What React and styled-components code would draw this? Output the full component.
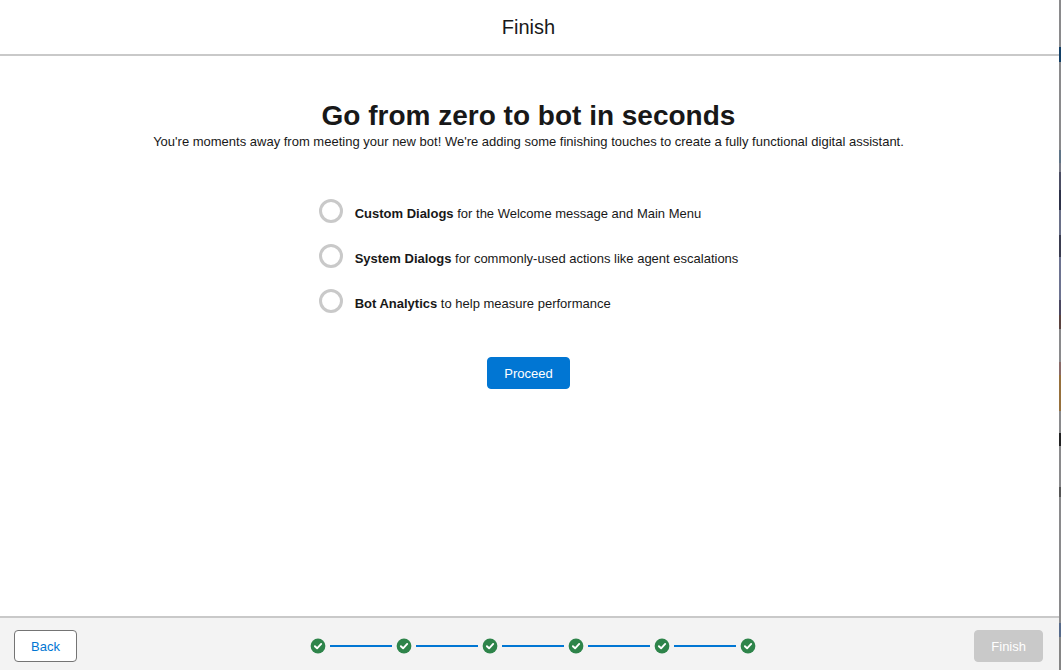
import React from "react";
import styled, { createGlobalStyle } from "styled-components";

const GlobalStyle = createGlobalStyle`
  *,
  *::before,
  *::after {
    box-sizing: border-box;
  }

  body {
    margin: 0;
    background: #8a8a8c;
    color: #181818;
    font-family: "Liberation Sans", Arial, sans-serif;
    font-size: 13px;
    line-height: 20px;
  }
`;

// The dimmed page shows at the right of the dialog
const Backdrop = styled.div`
  height: 100vh;
  padding-right: 2px;
  background: linear-gradient(
    to bottom,
    #8a8a8c 0 47px,
    #123f66 47px 62px,
    #8a8a8c 62px 150px,
    #5f7486 150px 163px,
    #787a86 163px 172px,
    #4c4e64 172px 190px,
    #2c3048 190px 210px,
    #6a7088 210px 235px,
    #3a3c50 235px 257px,
    #6d7390 257px 300px,
    #4a4660 300px 315px,
    #5b4340 315px 329px,
    #8a8a8c 329px 362px,
    #8a6a68 362px 375px,
    #96703c 375px 411px,
    #8a8a8c 411px 433px,
    #222222 433px 446px,
    #8a8a8c 446px 487px,
    #555555 487px 497px,
    #8a8a8c 497px 623px,
    #566a8a 623px 637px,
    #858585 637px
  );
`;

const Modal = styled.section`
  display: flex;
  flex-direction: column;
  height: 100%;
  background: #fff;
`;

const Header = styled.header`
  padding: 12px 16px 12px 14px;
  border-bottom: 2px solid #c9c9c9;
  text-align: center;
`;

const HeaderTitle = styled.h2`
  margin: 0;
  font-size: 20px;
  font-weight: 400;
  line-height: 30px;
`;

const Content = styled.main`
  display: flex;
  flex: 1;
  flex-direction: column;
  align-items: center;
  padding: 44px 16px 44px 14px;
`;

const Title = styled.h1`
  margin: 0;
  font-size: 28px;
  font-weight: 700;
  line-height: 32px;
`;

const Subtitle = styled.p`
  margin: 0;
  text-align: center;
`;

const StepList = styled.ul`
  display: flex;
  flex-direction: column;
  gap: 20px;
  margin: 47px 0 43px;
  padding: 0;
  list-style: none;
`;

const StepItem = styled.li`
  display: flex;
  gap: 12px;
`;

const StepCircle = styled.span`
  width: 24px;
  height: 24px;
  border: 3px solid #c9c9c9;
  border-radius: 50%;
`;

const StepText = styled.span`
  padding-top: 5px;
`;

const Button = styled.button`
  height: 32px;
  padding: 2px 16px 0;
  border: 1px solid #747474;
  border-radius: 4px;
  background: #fff;
  color: #0176d3;
  font: inherit;
  cursor: pointer;
`;

const BrandButton = styled(Button)`
  border-color: #0176d3;
  background: #0176d3;
  color: #fff;

  &:disabled {
    border-color: #c9c9c9;
    background: #c9c9c9;
    cursor: default;
  }
`;

const Footer = styled.footer`
  display: grid;
  grid-template-columns: 1fr auto 1fr;
  align-items: center;
  padding: 12px 16px 8px 14px;
  border-top: 2px solid #c9c9c9;
  background: #f3f3f3;
`;

const FooterEnd = styled.div`
  display: flex;
  justify-content: flex-end;
`;

const Progress = styled.ol`
  display: flex;
  align-items: center;
  margin: 0;
  padding: 0 0 0 8px;
  list-style: none;
`;

const ProgressStep = styled.li`
  display: flex;
  align-items: center;

  & + &::before {
    content: "";
    width: 62px;
    height: 2px;
    margin: 0 4px;
    background: #0176d3;
  }
`;

const StepIcon = styled.svg`
  display: block;
  width: 16px;
  height: 16px;
`;

const steps = [
  { name: "Custom Dialogs", text: "for the Welcome message and Main Menu" },
  {
    name: "System Dialogs",
    text: "for commonly-used actions like agent escalations",
  },
  { name: "Bot Analytics", text: "to help measure performance" },
];

const wizardSteps = [1, 2, 3, 4, 5, 6];

const CheckIcon = () => (
  <StepIcon viewBox="0 0 16 16" aria-hidden="true">
    <circle cx="8" cy="8" r="7.4" fill="#2e844a" />
    <path
      d="M4.9 8.2 7.1 10.3 11.2 5.9"
      fill="none"
      stroke="#fff"
      strokeWidth="1.9"
      strokeLinecap="round"
      strokeLinejoin="round"
    />
  </StepIcon>
);

const App = () => {
  return (
    <>
      <GlobalStyle />
      <Backdrop>
        <Modal role="dialog" aria-labelledby="modal-title">
          <Header>
            <HeaderTitle id="modal-title">Finish</HeaderTitle>
          </Header>
          <Content>
            <Title>Go from zero to bot in seconds</Title>
            <Subtitle>
              You're moments away from meeting your new bot! We're adding some
              finishing touches to create a fully functional digital assistant.
            </Subtitle>
            <StepList>
              {steps.map((step) => (
                <StepItem key={step.name}>
                  <StepCircle />
                  <StepText>
                    <b>{step.name}</b> {step.text}
                  </StepText>
                </StepItem>
              ))}
            </StepList>
            <BrandButton type="button">Proceed</BrandButton>
          </Content>
          <Footer>
            <div>
              <Button type="button">Back</Button>
            </div>
            <Progress>
              {wizardSteps.map((step) => (
                <ProgressStep key={step}>
                  <CheckIcon />
                </ProgressStep>
              ))}
            </Progress>
            <FooterEnd>
              <BrandButton type="button" disabled>
                Finish
              </BrandButton>
            </FooterEnd>
          </Footer>
        </Modal>
      </Backdrop>
    </>
  );
};

export default App;
